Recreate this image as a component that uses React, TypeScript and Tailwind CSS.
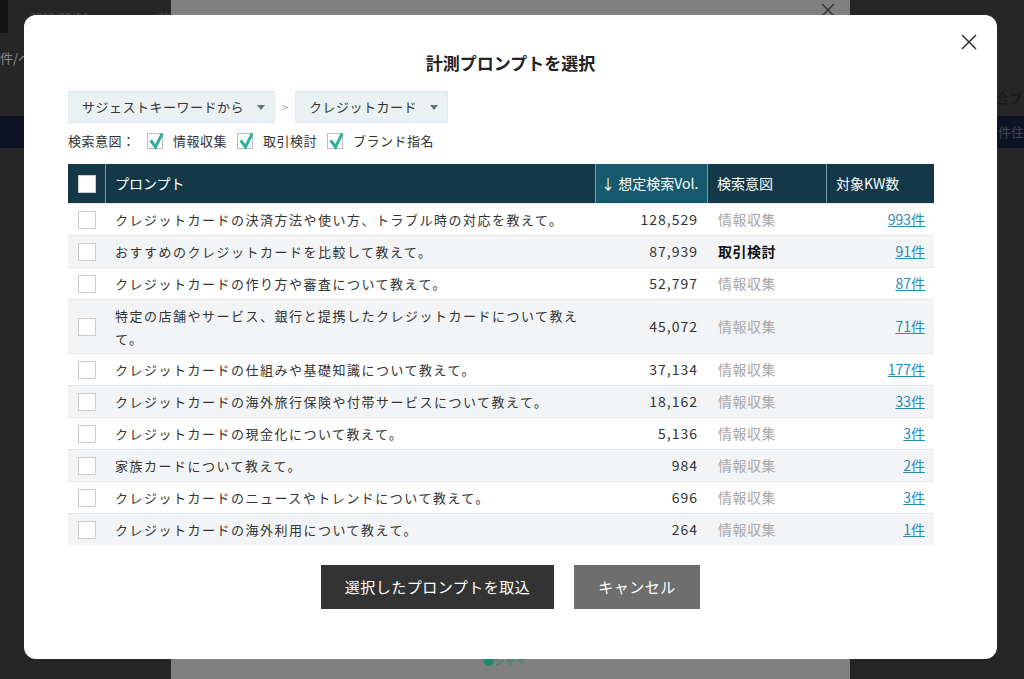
import React from "react";

const rows = [
  { p: "クレジットカードの決済方法や使い方、トラブル時の対応を教えて。", v: "128,529", i: "情報収集", k: "993件" },
  { p: "おすすめのクレジットカードを比較して教えて。", v: "87,939", i: "取引検討", k: "91件", bold: true },
  { p: "クレジットカードの作り方や審査について教えて。", v: "52,797", i: "情報収集", k: "87件" },
  { p: "特定の店舗やサービス、銀行と提携したクレジットカードについて教えて。", v: "45,072", i: "情報収集", k: "71件" },
  { p: "クレジットカードの仕組みや基礎知識について教えて。", v: "37,134", i: "情報収集", k: "177件" },
  { p: "クレジットカードの海外旅行保険や付帯サービスについて教えて。", v: "18,162", i: "情報収集", k: "33件" },
  { p: "クレジットカードの現金化について教えて。", v: "5,136", i: "情報収集", k: "3件" },
  { p: "家族カードについて教えて。", v: "984", i: "情報収集", k: "2件" },
  { p: "クレジットカードのニュースやトレンドについて教えて。", v: "696", i: "情報収集", k: "3件" },
  { p: "クレジットカードの海外利用について教えて。", v: "264", i: "情報収集", k: "1件" },
];

const font = { fontFamily: '"Noto Sans CJK JP", "Noto Sans", sans-serif' };

function Check() {
  return (
    <span className="relative inline-block w-[16px] h-[16px] border border-[#bdbdbd] bg-white">
      <svg className="absolute left-[1px] top-[-1px]" width="15" height="17" viewBox="0 0 15 17">
        <path d="M2.5 8.5 L6.5 14 L12.5 2" fill="none" stroke="#2bb39b" strokeWidth="3" strokeLinecap="square" />
      </svg>
    </span>
  );
}

function Caret() {
  return (
    <svg width="8" height="5" viewBox="0 0 8 5">
      <path d="M0 0 L8 0 L4 5 Z" fill="#5f6f75" />
    </svg>
  );
}

export default function App() {
  return (
    <div className="relative w-[1024px] h-[679px] overflow-hidden bg-[#262626]" style={font}>
      {/* dimmed background page */}
      <div className="absolute left-0 top-0 w-[8px] h-[33px] bg-[#111]" />
      <div className="absolute left-[30px] top-[8px] text-[11px] text-[#4a4a4a] whitespace-nowrap">2023/07/14</div>
      <div className="absolute left-[158px] top-[8px] text-[11px] text-[#4a4a4a]">20</div>
      <div className="absolute left-0 top-[48px] text-[13px] text-[#8a8a8a] whitespace-nowrap">件/ペ</div>
      <div className="absolute left-0 top-[116px] w-[1024px] h-[32px] bg-[#0c1424]" />
      <div className="absolute left-[996px] top-[88px] text-[13px] font-bold text-[#1a1a1a] whitespace-nowrap">合プラ</div>
      <div className="absolute left-[998px] top-[122px] text-[13px] text-[#3f4656] whitespace-nowrap">件住友</div>
      <div className="absolute left-[171px] top-[-10px] w-[679px] h-[700px] bg-[#808080] rounded-[6px]">
        <svg className="absolute right-[15px] top-[13px]" width="14" height="14" viewBox="0 0 14 14">
          <path d="M1 1 L13 13 M13 1 L1 13" stroke="#333" strokeWidth="1.5" />
        </svg>
        <div className="absolute left-[312px] top-[662px] text-[11px] text-[#1e8a6c] whitespace-nowrap">●ジャイ</div>
      </div>

      {/* main modal */}
      <div className="absolute left-[24px] top-[15px] w-[973px] h-[644px] bg-white rounded-[12px] pl-[44px] pr-[63px]">
        <button className="absolute right-[20px] top-[19px] w-[16px] h-[16px]">
          <svg width="16" height="16" viewBox="0 0 16 16">
            <path d="M1 1 L15 15 M15 1 L1 15" stroke="#333" strokeWidth="1.5" />
          </svg>
        </button>
        <h1 className="pt-[35px] text-center text-[17px] font-bold text-[#222] leading-[26px] pl-[19px]">
          計測プロンプトを選択
        </h1>

        <div className="mt-[15px] flex items-center">
          <div className="flex items-center justify-between w-[207px] h-[32px] bg-[#e9f1f3] border border-[#e0eaec] pl-[13px] pr-[9px] text-[13px] text-[#333] tracking-[0.5px]">
            <span>サジェストキーワードから</span>
            <Caret />
          </div>
          <span className="w-[20px] text-center text-[11px] text-[#999]">&gt;</span>
          <div className="flex items-center justify-between w-[153px] h-[32px] bg-[#e9f1f3] border border-[#e0eaec] pl-[13px] pr-[9px] text-[13px] text-[#333] tracking-[0.5px]">
            <span>クレジットカード</span>
            <Caret />
          </div>
        </div>

        <div className="mt-[7px] flex items-center h-[22px] text-[13px] text-[#333] tracking-[0.5px]">
          <span className="w-[79px]">検索意図：</span>
          <Check />
          <span className="ml-[10px] mr-[10px]">情報収集</span>
          <Check />
          <span className="ml-[10px] mr-[10px]">取引検討</span>
          <Check />
          <span className="ml-[10px]">ブランド指名</span>
        </div>

        <div className="mt-[12px] w-[866px]">
          <div className="flex h-[39px] bg-[#133848] text-white text-[14px]">
            <div className="w-[37px] flex items-center justify-center">
              <span className="w-[18px] h-[18px] bg-white border border-[#ccc]" />
            </div>
            <div className="w-[490px] flex items-center pl-[9px] border-l border-[#7f9aa4]">プロンプト</div>
            <div className="w-[112px] flex items-center pl-[5px] bg-[#175a6d] border-l border-[#7f9aa4]">↓ 想定検索Vol.</div>
            <div className="w-[119px] flex items-center pl-[9px] border-l border-[#7f9aa4]">検索意図</div>
            <div className="w-[108px] flex items-center pl-[9px] border-l border-[#7f9aa4]">対象KW数</div>
          </div>
          {rows.map((r, idx) => (
            <div
              key={idx}
              className={
                "flex items-center text-[13px] text-[#333] border-t border-dotted border-[#d4d4d4] " +
                (idx % 2 === 1 ? "bg-[#f3f4f6] " : "bg-white ") +
                (idx === 3 ? "h-[54px]" : "h-[32px]")
              }
            >
              <div className="w-[37px] flex items-center justify-center">
                <span className="w-[18px] h-[18px] bg-white border border-[#ccc]" />
              </div>
              <div className="w-[490px] pl-[10px] pr-[8px] tracking-[1.5px] leading-[23px]">{r.p}</div>
              <div className="w-[112px] text-right pr-[9px] text-[14px] tracking-[1px]">{r.v}</div>
              <div
                className={
                  "w-[119px] pl-[11px] text-[14px] tracking-[0.5px] " +
                  (r.bold ? "font-bold text-[#111]" : "text-[#a8a8a8]")
                }
              >
                {r.i}
              </div>
              <div className="w-[108px] text-right pr-[9px] text-[14px]">
                <a className="underline text-[#2a8cb5]">{r.k}</a>
              </div>
            </div>
          ))}
        </div>

        <div className="mt-[20px] flex justify-center gap-[20px] -ml-[44px] -mr-[63px]">
          <button className="w-[233px] h-[44px] bg-[#333] text-white text-[15px] tracking-[0.5px]">
            選択したプロンプトを取込
          </button>
          <button className="w-[126px] h-[44px] bg-[#6e6e6e] text-white text-[15px] tracking-[0.5px]">
            キャンセル
          </button>
        </div>
      </div>
    </div>
  );
}
